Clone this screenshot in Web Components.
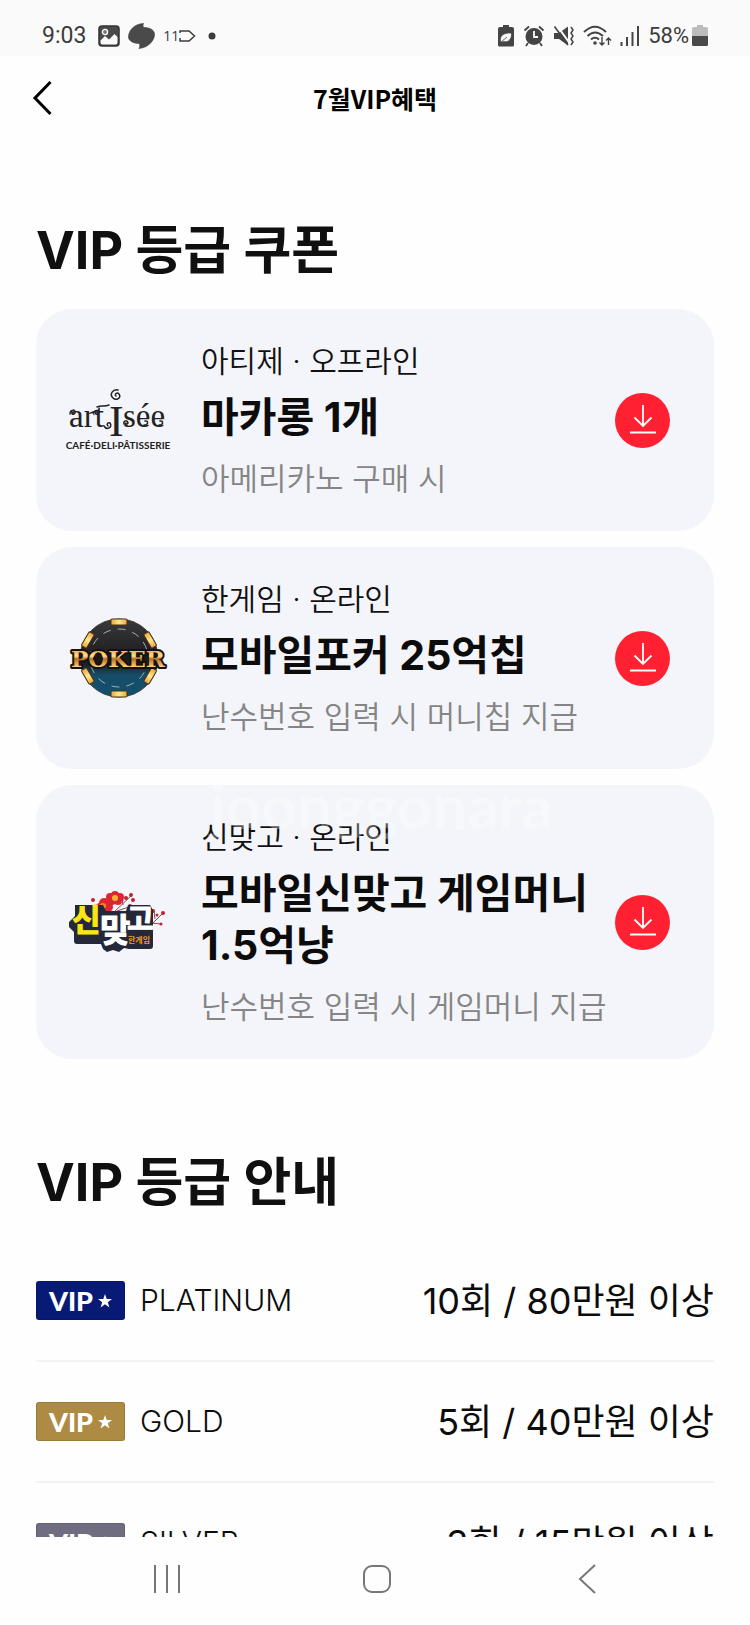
<!DOCTYPE html>
<html lang="ko">
<head>
<meta charset="utf-8">
<meta name="viewport" content="width=device-width, initial-scale=1">
<title>7월 VIP 혜택</title>
<style>
  html, body { height: 100%; }
  body {
    margin: 0;
    background: #fefefe;
    color: #0c0c0d;
    font-family: Inter, "Noto Sans CJK KR", sans-serif;
  }
</style>
</head>
<body>
<vip-app></vip-app>

<template id="status-bar">
  <style>
    :host { display: flex; justify-content: space-between; align-items: center; box-sizing: border-box; height: 56px; padding: 16px 42px 0; background: #fafafa; color: #3c3c3c; font: 400 23px/28px Roboto, sans-serif; }
    .side { display: flex; align-items: center; gap: 8px; }
    .time { margin-right: 4px; }
    .tag { display: flex; align-items: center; font: 400 14px/20px "Open Sans", sans-serif; }
    .charge { display: flex; align-items: center; gap: 3px; font-size: 22px; }
    svg { display: block; }
    .dot { margin-left: 4px; }
  </style>
  <div class="side">
    <span class="time">9:03</span>
    <svg width="22" height="22" viewBox="0 0 22 22"><rect x="1" y="1" width="20" height="20" rx="3" fill="#4a4a4a" stroke="#333" stroke-width="1.5"/><circle cx="7" cy="7" r="2.6" fill="#777" stroke="#fff" stroke-width="1.3"/><path d="M2.5 15.5 7 11l4 3.5L16.500 9l3 3v5.500q0 2-2 2h-13q-2 0-2-2z" fill="#fafafa"/></svg>
    <svg width="27" height="26" viewBox="0 0 27 26"><path d="M15.500.5C5.500 1 .5 8 .5 14c0 3.500 4 6.500 11 6.500.500 2 .500 3.500-.500 5C21 24.500 26.500 17 26.500 11.500 26.500 7 22 4.500 15.500 4.500c-.600-1.500-.600-2.600 0-4z" fill="#4a4a4a" stroke="#333" stroke-width=".6"/></svg>
    <span class="tag">11<svg width="17" height="14" viewBox="0 0 17 14"><path d="M1 9V12h9l5.500-5L10 2H1v2" fill="none" stroke="#3c3c3c" stroke-width="1.500"/></svg></span>
    <svg class="dot" width="8" height="8" viewBox="0 0 8 8"><circle cx="4" cy="4" r="3.500" fill="#3c3c3c"/></svg>
  </div>
  <div class="side">
    <svg width="18" height="22" viewBox="0 0 18 22"><path d="M6 0h6v2h3q2 0 2 2v16q0 1.500-1.500 1.500h-13Q1 21.500 1 20V4q0-2 2-2h3z" fill="#444"/><path d="M3.500 16.500C2.500 11 6 7.500 14.500 8c.500 6-3 10-8 8.500M3.500 17.500 10 12" fill="#fafafa" stroke="#444" stroke-width=".8"/></svg>
    <svg width="22" height="22" viewBox="0 0 22 22"><circle cx="11" cy="11.500" r="8.500" fill="#444"/><path d="M1.500 5.500 6 1.500M20.500 5.500 16 1.500M5 18l-2 3M17 18l2 3" stroke="#444" stroke-width="1.800" fill="none"/><path d="M11 6v6h4" stroke="#fafafa" stroke-width="1.800" fill="none"/></svg>
    <svg width="22" height="22" viewBox="0 0 22 22"><path d="M1 8h5l9-6.500v19L6 14H1z" fill="#444"/><path d="M3.500 0 18 20" stroke="#fafafa" stroke-width="2"/><path d="M1.500 1.500 15 20" stroke="#444" stroke-width="1.600"/><path d="m18 2 2 3-2 3 2 3-2 3 2 3-2 3" fill="none" stroke="#444" stroke-width="1.500"/></svg>
    <svg width="29" height="22" viewBox="0 0 29 22"><path d="M1 7Q12-3.500 23 7M4.500 11Q12 4 20 11M8 14.500q4-3.500 8 0" fill="none" stroke="#444" stroke-width="2"/><circle cx="12" cy="18" r="1.800" fill="#444"/><path d="M19 12v8m-2.500-2.500L19 20l2.500-2.500M25.500 20v-7M23 15.500l2.500-2.500 2.500 2.500" fill="none" stroke="#444" stroke-width="1.400"/></svg>
    <svg width="20" height="22" viewBox="0 0 20 22"><path d="M1.500 21v-4M7 21V12M12.500 21V7" stroke="#444" stroke-width="2"/><path d="M18 21V1" stroke="#444" stroke-width="2"/></svg>
    <span class="charge">58%<svg width="16" height="22" viewBox="0 0 16 22"><path d="M5 0h6v2h3q2 0 2 2v7H0V4q0-2 2-2h3z" fill="#bcbcbc"/><path d="M0 11h16v8.500q0 1.500-1.500 1.500h-13Q0 21 0 19.500z" fill="#4a4a4a"/></svg></span>
  </div>
</template>

<template id="page-header">
  <style>
    :host { display: grid; grid-template-columns: 52px 1fr 52px; align-items: center; box-sizing: border-box; height: 88px; padding: 0 16px 4px; }
    button { width: 52px; height: 52px; padding: 0; border: 0; background: none; }
    svg { display: block; margin: auto; }
    h1 { margin: 0; text-align: center; color: #000; font: 700 25px/36px "Noto Sans CJK KR", sans-serif; }
  </style>
  <button type="button" aria-label="뒤로"><svg width="20" height="36" viewBox="0 0 20 36"><path d="M18.500 2 3 18l15.500 16" fill="none" stroke="#000" stroke-width="3"/></svg></button>
  <h1><slot></slot></h1>
</template>

<template id="vip-section">
  <style>
    :host { display: block; }
    h2 { margin: 0 0 26px; color: #101010; font-size: 52px; font-weight: 700; line-height: 64px; }
    .body { display: flex; flex-direction: column; gap: 16px; }
  </style>
  <h2><slot name="title"></slot></h2>
  <div class="body"><slot></slot></div>
</template>

<template id="vip-coupon">
  <style>
    :host { display: grid; grid-template-columns: 102px 1fr 55px; align-items: center; padding: 32px 44px 32px 31px; border-radius: 36px; background: #f4f5fa; }
    .text { display: flex; flex-direction: column; padding: 0 8px 0 32px; word-break: keep-all; }
    .place, .note { line-height: 40px; font-weight: 350; }
    .place { font-size: 30px; color: #111; }
    .note { font-size: 31px; color: #858585; }
    .name { margin: 10px 0 16px; font-size: 41px; line-height: 52px; font-weight: 700; color: #0c0c0c; }
    button { width: 55px; height: 55px; padding: 0; border: 0; border-radius: 50%; background: #ff2132; }
    svg { display: block; margin: auto; }
  </style>
  <slot name="logo"></slot>
  <div class="text">
    <div class="place"><slot name="place"></slot></div>
    <div class="name"><slot name="name"></slot></div>
    <div class="note"><slot name="note"></slot></div>
  </div>
  <button type="button" aria-label="쿠폰 다운로드"><svg width="28" height="32" viewBox="0 0 28 32"><path d="M14 1v21M5.500 13.500 14 22l8.500-8.500M1 28.500h26" fill="none" stroke="#fff" stroke-width="1.800"/></svg></button>
</template>

<template id="logo-artisee">
  <style>:host { display: block; } svg { display: block; overflow: visible; }</style>
  <svg width="102" height="64" viewBox="0 0 102 64" role="img" aria-label="artisée">
    <g fill="#222" font-family="Liberation Serif, serif" font-size="33">
      <text x="2" y="39">art</text><text x="42" y="48" font-size="44">I</text><text x="56" y="39">sée</text>
    </g>
    <g fill="none" stroke="#222" stroke-width="1.500" stroke-linecap="round">
      <path d="M49 8c-2-2 1-4 3-2 3 4-3 7-6 4-4-4 0-9 5-8"/>
      <path d="M3 26c0-5 6-5 5-1-1 2-4 1-3-1M27 24c2-3 6-1 4 2-2 1-3-1-2-2M37 38c3 5 9 1 6-3-2-1-4 1-2 3M57 36c-1-4 4-4 4-1-1 2-3 1-2 0M78 33c4-1 3 5-1 4M93 33c4-1 3 5-1 4M30 19c4-2 8 0 12-2"/>
    </g>
    <text x="51" y="61" text-anchor="middle" fill="#222" font-family="Lato, sans-serif" font-weight="700" font-size="10">CAFÉ·DELI·PÂTISSERIE</text>
  </svg>
</template>

<template id="logo-poker">
  <style>:host { display: block; } svg { display: block; overflow: visible; }</style>
  <svg width="102" height="82" viewBox="0 0 102 82" role="img" aria-label="POKER">
    <defs>
      <linearGradient id="chip" x1="0" y1="0" x2="0" y2="1"><stop offset="0" stop-color="#3a3a3c"/><stop offset=".55" stop-color="#19191c"/><stop offset=".72" stop-color="#174c68"/><stop offset="1" stop-color="#0e526f"/></linearGradient>
      <linearGradient id="gold" gradientUnits="userSpaceOnUse" x1="0" y1="32" x2="0" y2="50"><stop offset="0" stop-color="#f3a944"/><stop offset=".4" stop-color="#ffdc92"/><stop offset=".55" stop-color="#b8701f"/><stop offset="1" stop-color="#ffd27a"/></linearGradient>
      <linearGradient id="tab"><stop offset="0" stop-color="#e9a93a"/><stop offset=".5" stop-color="#ffe88a"/><stop offset="1" stop-color="#e9a24c"/></linearGradient>
    </defs>
    <circle cx="52" cy="41" r="39" fill="url(#chip)" stroke="#443a35"/>
    <circle cx="52" cy="41" r="29" fill="none" stroke="#a6adb0" stroke-width="1" stroke-dasharray="8 7"/>
    <g fill="url(#tab)" stroke="#493018">
      <rect x="44" y="2" width="16" height="6" rx="1"/>
      <rect x="44" y="2" width="16" height="6" rx="1" transform="rotate(60 52 41)"/>
      <rect x="44" y="2" width="16" height="6" rx="1" transform="rotate(120 52 41)"/>
      <rect x="44" y="2" width="16" height="6" rx="1" transform="rotate(180 52 41)"/>
      <rect x="44" y="2" width="16" height="6" rx="1" transform="rotate(240 52 41)"/>
      <rect x="44" y="2" width="16" height="6" rx="1" transform="rotate(300 52 41)"/>
    </g>
    <text x="51" y="50" text-anchor="middle" font-family="DejaVu Serif, serif" font-weight="700" font-size="23" fill="url(#gold)" stroke="#15110f" stroke-width="4" stroke-linejoin="round" paint-order="stroke">POKER</text>
    <path d="M31 35c-2 3-5 4-5 7 0 2 3 3 4 1l-1 3h4l-1-3c1 2 4 1 4-1 0-3-3-4-5-7z" fill="#1d1712"/>
  </svg>
</template>

<template id="logo-matgo">
  <style>:host { display: block; } svg { display: block; overflow: visible; }</style>
  <svg width="102" height="66" viewBox="0 0 102 66" role="img" aria-label="신맞고">
    <g fill="none" stroke="#8a4b50" stroke-width="1"><path d="M46 24 65 6M82 38 96 24M50 22l12-4M84 34l10 1M56 16l-1-6M88 30l-1-8"/></g>
    <g fill="#c3222f"><circle cx="26" cy="11" r="2"/><circle cx="64" cy="6" r="2"/><circle cx="59" cy="9" r="2"/><circle cx="66" cy="11" r="2"/><circle cx="55" cy="11" r="1.500"/><circle cx="63" cy="17" r="2"/><circle cx="86" cy="22" r="2"/><circle cx="96" cy="24" r="2"/><circle cx="90" cy="26" r="1.500"/><circle cx="94" cy="35" r="1.500"/></g>
    <g fill="#dd2631"><circle cx="48" cy="6" r="4"/><circle cx="53" cy="8" r="4"/><circle cx="51" cy="12" r="4"/><circle cx="45" cy="12" r="4"/><circle cx="43" cy="8" r="4"/><circle cx="37" cy="14" r="5"/><circle cx="41" cy="18" r="5"/><circle cx="33" cy="19" r="5"/></g>
    <circle cx="48" cy="9" r="3" fill="#ffb735"/><circle cx="36" cy="17" r="3" fill="#e88b24"/>
    <path d="M8 16h28l3 6h20l2-6h22l3 5v36q0 3-3 3H62l-5-1-5 4-6-2-6 2-4-3-2-5H10q-3 0-3-3v-9l-5-5v-5l6-6z" fill="#252838"/>
    <g font-family="Noto Sans CJK KR, sans-serif" font-weight="700" stroke-linejoin="round">
      <text x="5" y="42" font-size="31" fill="#ffe514" stroke="#ffe514">신</text>
      <text x="33" y="53" font-size="33" fill="#fff" stroke="#fff">맞</text>
      <text x="60" y="41" font-size="29" fill="#fff" stroke="#fff">고</text>
      <text x="61" y="54" font-size="8" fill="#f19825">한게임</text>
    </g>
  </svg>
</template>

<template id="vip-badge">
  <style>
    :host { display: inline-flex; align-items: center; justify-content: center; gap: 5px; box-sizing: border-box; width: 89px; height: 39px; border-radius: 3px; background: var(--tier); box-shadow: inset 0 0 0 1px rgba(0, 0, 0, .12); color: #fff; font: 900 27px/39px Lato, sans-serif; }
    svg { display: block; }
  </style>
  <span>VIP</span><svg width="14" height="14" viewBox="0 0 14 14"><path d="m7 0 1.700 5H14L9.800 8.200 11.400 13.500 7 10.300 2.600 13.500 4.200 8.200 0 5h5.300z" fill="#fff"/></svg>
</template>

<template id="tier-table">
  <style>
    :host { display: block; }
    table { width: 100%; border-collapse: collapse; }
    th, td { height: 119px; padding: 0; border-bottom: 2px solid #f3f3f3; }
    th { text-align: left; font-weight: 350; font-size: 30px; line-height: 39px; color: #0c0c0d; }
    td { text-align: right; font-weight: 400; font-size: 36px; line-height: 52px; white-space: nowrap; }
    .tier { display: flex; align-items: center; gap: 15px; }
  </style>
  <table>
    <tbody>
      <tr><th scope="row"><span class="tier"><vip-badge style="--tier:#071b76"></vip-badge>PLATINUM</span></th><td>10회 / 80만원 이상</td></tr>
      <tr><th scope="row"><span class="tier"><vip-badge style="--tier:#ae8b43"></vip-badge>GOLD</span></th><td>5회 / 40만원 이상</td></tr>
      <tr><th scope="row"><span class="tier"><vip-badge style="--tier:#716d80"></vip-badge>SILVER</span></th><td>3회 / 15만원 이상</td></tr>
    </tbody>
  </table>
</template>

<template id="system-nav">
  <style>
    :host { display: flex; justify-content: center; gap: 146px; align-items: center; box-sizing: border-box; height: 88px; padding: 0 0 4px 4px; background: #fefefe; }
    button { width: 64px; height: 64px; padding: 0; border: 0; background: none; }
    svg { display: block; margin: auto; fill: none; stroke: #777; stroke-width: 2; }
  </style>
  <button type="button" aria-label="최근 앱"><svg width="30" height="30" viewBox="0 0 30 30"><path d="M3 1v28M15 1v28M27 1v28"/></svg></button>
  <button type="button" aria-label="홈"><svg width="30" height="30" viewBox="0 0 30 30"><rect x="2" y="2" width="26" height="26" rx="8"/></svg></button>
  <button type="button" aria-label="뒤로"><svg width="30" height="30" viewBox="0 0 30 30"><path d="M23 1 8 15l15 14"/></svg></button>
</template>

<template id="vip-app">
  <style>
    :host { display: flex; flex-direction: column; height: 100vh; }
    status-bar, page-header, system-nav { flex: none; }
    main { flex: 1; min-height: 0; overflow: hidden; padding: 75px 36px 0; }
    vip-section + vip-section { margin-top: 92px; }
    .marked { position: relative; }
    .mark { position: absolute; top: -12px; left: 174px; color: #fff; opacity: .3; font: 700 62px/64px Lato, sans-serif; pointer-events: none; }
  </style>
  <status-bar></status-bar>
  <page-header>7월VIP혜택</page-header>
  <main>
    <vip-section>
      <span slot="title">VIP 등급 쿠폰</span>
      <vip-coupon>
        <logo-artisee slot="logo"></logo-artisee>
        <span slot="place">아티제 · 오프라인</span>
        <span slot="name">마카롱 1개</span>
        <span slot="note">아메리카노 구매 시</span>
      </vip-coupon>
      <vip-coupon>
        <logo-poker slot="logo"></logo-poker>
        <span slot="place">한게임 · 온라인</span>
        <span slot="name">모바일포커 25억칩</span>
        <span slot="note">난수번호 입력 시 머니칩 지급</span>
      </vip-coupon>
      <div class="marked">
        <vip-coupon>
          <logo-matgo slot="logo"></logo-matgo>
          <span slot="place">신맞고 · 온라인</span>
          <span slot="name">모바일신맞고 게임머니 1.5억냥</span>
          <span slot="note">난수번호 입력 시 게임머니 지급</span>
        </vip-coupon>
        <span class="mark" aria-hidden="true">joonggonara</span>
      </div>
    </vip-section>
    <vip-section>
      <span slot="title">VIP 등급 안내</span>
      <tier-table></tier-table>
    </vip-section>
  </main>
  <system-nav></system-nav>
</template>

<script>
  class TemplateElement extends HTMLElement {
    constructor() {
      super();
      const template = document.getElementById(this.localName);
      this.attachShadow({ mode: "open" }).append(template.content.cloneNode(true));
    }
  }
  for (const name of ["status-bar", "page-header", "vip-section", "vip-coupon", "logo-artisee", "logo-poker", "logo-matgo", "vip-badge", "tier-table", "system-nav", "vip-app"]) {
    customElements.define(name, class extends TemplateElement {});
  }
</script>
</body>
</html>
